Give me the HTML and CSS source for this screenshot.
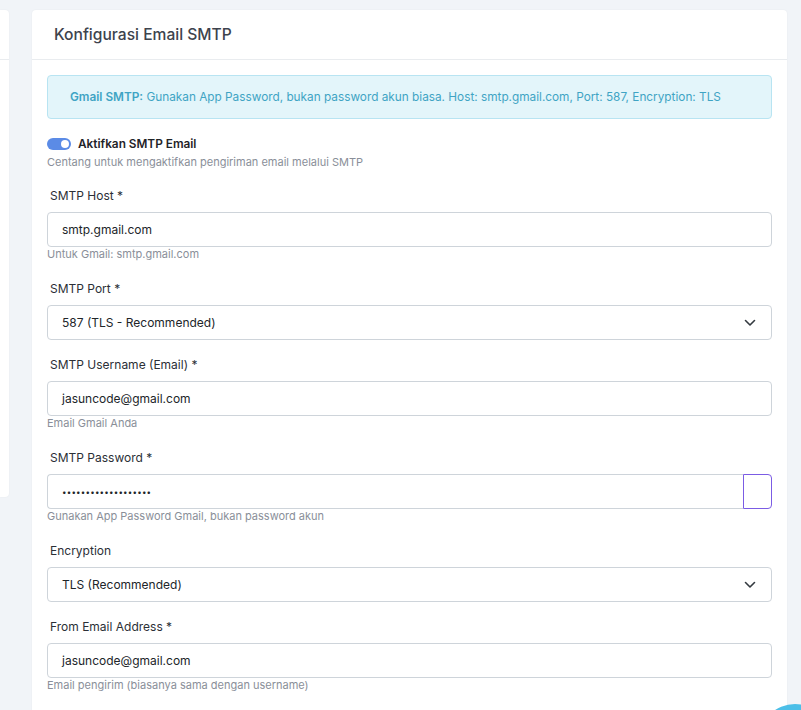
FILE: index.html
```html
<!DOCTYPE html>
<html lang="id">
<head>
<meta charset="utf-8">
<title>Konfigurasi Email SMTP</title>
<link rel="stylesheet" href="styles.css">
</head>
<body>
<div class="layout">
  <aside class="side-card">
    <div class="side-header"></div>
  </aside>
  <main class="card">
    <div class="card-header">
      <h2 class="card-title">Konfigurasi Email SMTP</h2>
    </div>
    <div class="card-body">
      <div class="alert"><strong>Gmail SMTP:</strong> Gunakan App Password, bukan password akun biasa. Host: smtp.gmail.com, Port: 587, Encryption: TLS</div>

      <div class="group group-switch">
        <div class="switch-row">
          <span class="switch"><span class="knob"></span></span>
          <span class="switch-label">Aktifkan SMTP Email</span>
        </div>
        <div class="help help-switch">Centang untuk mengaktifkan pengiriman email melalui SMTP</div>
      </div>

      <div class="group">
        <label class="label">SMTP Host *</label>
        <div class="control">smtp.gmail.com</div>
        <div class="help">Untuk Gmail: smtp.gmail.com</div>
      </div>

      <div class="group">
        <label class="label">SMTP Port *</label>
        <div class="control select">587 (TLS - Recommended)
          <svg class="chev" width="12" height="8" viewBox="0 0 12 8"><path d="M1.5 1.5 L6 6 L10.5 1.5" fill="none" stroke="#343a40" stroke-width="1.6" stroke-linecap="round" stroke-linejoin="round"/></svg>
        </div>
      </div>

      <div class="group">
        <label class="label">SMTP Username (Email) *</label>
        <div class="control">jasuncode@gmail.com</div>
        <div class="help">Email Gmail Anda</div>
      </div>

      <div class="group">
        <label class="label">SMTP Password *</label>
        <div class="input-group">
          <div class="control control-grow pw">&#8226;&#8226;&#8226;&#8226;&#8226;&#8226;&#8226;&#8226;&#8226;&#8226;&#8226;&#8226;&#8226;&#8226;&#8226;&#8226;&#8226;&#8226;&#8226;</div>
          <span class="addon"></span>
        </div>
        <div class="help">Gunakan App Password Gmail, bukan password akun</div>
      </div>

      <div class="group">
        <label class="label">Encryption</label>
        <div class="control select">TLS (Recommended)
          <svg class="chev" width="12" height="8" viewBox="0 0 12 8"><path d="M1.5 1.5 L6 6 L10.5 1.5" fill="none" stroke="#343a40" stroke-width="1.6" stroke-linecap="round" stroke-linejoin="round"/></svg>
        </div>
      </div>

      <div class="group">
        <label class="label">From Email Address *</label>
        <div class="control">jasuncode@gmail.com</div>
        <div class="help">Email pengirim (biasanya sama dengan username)</div>
      </div>
    </div>
  </main>
</div>
<div class="fab"></div>
</body>
</html>
```

FILE: styles.css
```css
html, body {
  margin: 0;
  padding: 0;
}
body {
  background: #f1f4f8;
  font-family: Inter, "Noto Sans", sans-serif;
  color: #212529;
  height: 710px;
  overflow: hidden;
  position: relative;
}
.layout {
  display: flex;
  align-items: flex-start;
  gap: 23px;
  padding-top: 10px;
}
.side-card {
  width: 9px;
  height: 487px;
  background: #fff;
  border-radius: 0 4px 4px 0;
  box-shadow: 0 0 2px rgba(0,0,0,0.06);
  flex: none;
}
.side-header {
  height: 49px;
  border-bottom: 1px solid #e9ecef;
}
.card {
  width: 755px;
  flex: none;
  background: #fff;
  border-radius: 4px 4px 0 0;
  box-shadow: 0 0 2px rgba(0,0,0,0.06);
  min-height: 720px;
}
.card-header {
  height: 49px;
  border-bottom: 1px solid #e9ecef;
  display: flex;
  align-items: center;
  padding-left: 22px;
}
.card-title {
  margin: 0;
  font-size: 15.6px;
  font-weight: 500;
  color: #3d434d;
}
.card-body {
  padding: 15px;
}
.alert {
  background: #e3f5fa;
  border: 1px solid #b8e4f2;
  border-radius: 4px;
  color: #3fa4c4;
  font-size: 11.8px;
  line-height: 16px;
  padding: 13px 22px 13px 22px;
  margin-bottom: 16px;
}
.alert strong {
  font-weight: 600;
}
.group {
  margin-bottom: 16px;
}
.group-switch {
  margin-bottom: 17px;
}
.switch-row {
  display: flex;
  align-items: center;
  height: 17px;
}
.switch {
  width: 24px;
  height: 12px;
  border-radius: 6px;
  background: #5b8be6;
  display: flex;
  align-items: center;
  justify-content: flex-end;
  padding-right: 2px;
  box-sizing: border-box;
  margin-right: 7px;
}
.knob {
  width: 8px;
  height: 8px;
  border-radius: 50%;
  background: #fff;
}
.switch-label {
  font-size: 11.8px;
  font-weight: 600;
  color: #1f2328;
}
.label {
  display: block;
  font-size: 12px;
  line-height: 17px;
  color: #2b2f36;
  padding-left: 3px;
  margin-bottom: 8px;
}
.control {
  height: 35px;
  box-sizing: border-box;
  border: 1px solid #ced4da;
  border-radius: 4px;
  background: #fff;
  padding: 0 14px;
  display: flex;
  align-items: center;
  font-size: 12px;
  color: #212529;
}
.select {
  justify-content: space-between;
  padding-right: 15px;
}
.chev {
  display: block;
}
.pw {
  font-size: 8px;
  letter-spacing: 0.2px;
}
.input-group {
  display: flex;
}
.control-grow {
  flex: 1;
  border-radius: 4px 0 0 4px;
  border-right: none;
}
.addon {
  width: 29px;
  height: 35px;
  box-sizing: border-box;
  border: 1px solid #7b5ce4;
  border-radius: 0 4px 4px 0;
  background: #fff;
}
.help {
  font-size: 11px;
  line-height: 15px;
  color: #8a8f99;
  padding-bottom: 2px;
}
.help-switch {
  margin-top: 3px;
  padding-bottom: 0;
}
.fab {
  position: absolute;
  left: 759px;
  top: 704px;
  width: 72px;
  height: 72px;
  border-radius: 50%;
  background: #4cbfe8;
}
```
